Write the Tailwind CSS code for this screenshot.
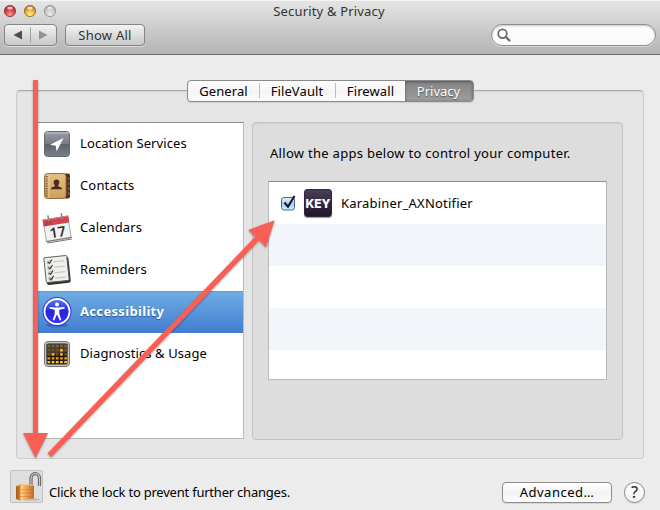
<!DOCTYPE html>
<html lang="en">
<head>
<meta charset="utf-8">
<title>Security &amp; Privacy</title>
<script src="https://cdn.jsdelivr.net/npm/@tailwindcss/browser@4"></script>
</head>
<body class="relative w-[660px] h-[510px] overflow-hidden bg-[#ececec] font-['Noto_Sans',sans-serif] text-[13px] leading-4 text-black flex flex-col">

<header class="h-[55px] shrink-0 border-b border-[#6a6a6a] bg-linear-to-b from-[#e6e6e6] to-[#b4b4b4] text-[#333] shadow-[inset_0_1px_0_#f4f4f4]">
  <div class="h-6 grid grid-cols-[1fr_auto_1fr] items-center pl-1 pr-[6px]">
    <div class="flex gap-2 -mt-[2px]">
      <svg class="w-3 h-3 overflow-visible" viewBox="0 0 12 12"><defs>
        <radialGradient id="r" cx=".5" cy=".8" r=".75"><stop offset="0" stop-color="#ff9c9c"/><stop offset=".5" stop-color="#e2474d"/><stop offset="1" stop-color="#a82028"/></radialGradient>
        <radialGradient id="y" cx=".5" cy=".8" r=".75"><stop offset="0" stop-color="#ffeb8c"/><stop offset=".5" stop-color="#eeb445"/><stop offset="1" stop-color="#a86f1d"/></radialGradient>
        <radialGradient id="g" cx=".5" cy=".8" r=".75"><stop offset="0" stop-color="#ececec"/><stop offset=".6" stop-color="#cacaca"/><stop offset="1" stop-color="#a5a5a5"/></radialGradient></defs>
        <circle cx="6" cy="6" r="5.6" fill="url(#r)" stroke="#873338" stroke-width=".8"/><ellipse cx="6" cy="3" rx="2.8" ry="1.5" fill="#fff" opacity=".7"/></svg>
      <svg class="w-3 h-3 overflow-visible" viewBox="0 0 12 12"><circle cx="6" cy="6" r="5.6" fill="url(#y)" stroke="#8a6528" stroke-width=".8"/><ellipse cx="6" cy="3" rx="2.8" ry="1.5" fill="#fff" opacity=".7"/></svg>
      <svg class="w-3 h-3 overflow-visible" viewBox="0 0 12 12"><circle cx="6" cy="6" r="5.6" fill="url(#g)" stroke="#8b8b8b" stroke-width=".8"/><ellipse cx="6" cy="3" rx="2.8" ry="1.5" fill="#fff" opacity=".6"/></svg>
    </div>
    <h1 class="-mt-[2px] text-[13px] tracking-[.17px]">Security &amp; Privacy</h1>
  </div>
  <div class="flex items-center h-[22px] pl-1 pr-1">
    <div class="flex items-center w-[53px] h-[22px] rounded border border-[#858585] bg-linear-to-b from-[#f3f3f3] to-[#c8c8c8] shadow-[0_1px_0_#dadada]">
      <svg class="w-full h-5" viewBox="0 0 51 20"><path d="M17 5.500v9L8.500 10z" fill="#4c4c4c"/><path d="M34 5.500v9l8.500-4.500z" fill="#929292"/><path d="M25.500 2.500v15" stroke="#a0a0a0"/></svg>
    </div>
    <button class="ml-2 w-20 h-[22px] rounded border border-[#858585] bg-linear-to-b from-[#f3f3f3] to-[#c8c8c8] shadow-[0_1px_0_#dadada] leading-5 tracking-[.25px]">Show All</button>
    <div class="ml-auto w-[165px] h-[22px] rounded-full border border-[#8d8d8d] bg-[#fcfcfc] shadow-[inset_0_1px_2px_#c5c5c5,0_1px_0_#d5d5d5] flex items-center pl-[5px]">
      <svg class="w-[14px] h-[14px]" viewBox="0 0 14 14" fill="none" stroke="#6a6a6a" stroke-width="1.800"><circle cx="5.500" cy="5.700" r="4.300"/><path d="m8.800 9 3.600 3.500" stroke-width="2.300" stroke-linecap="round"/></svg>
    </div>
  </div>
</header>

<main class="mt-[35px] ml-4 w-[628px] h-[369px] shrink-0 rounded border border-[#cdcdcd] border-t-[#a9a9a9] bg-[#e5e5e5] shadow-[inset_0_1px_1px_#d3d3d3] flex flex-col">
  <nav class="-mt-[11px] mx-auto w-[287px] h-[22px] shrink-0 flex rounded border border-[#898989] bg-linear-to-b from-white via-[#f5f5f5] to-[#fbfbfb] text-center leading-5 shadow-[0_1px_1px_#cfcfcf] overflow-hidden">
    <span class="w-[71px] pl-px tracking-[.1px]">General</span>
    <span class="h-[15px] mt-[2px] border-l border-[#bcbcbc]"></span>
    <span class="w-[75px] tracking-[.1px]">FileVault</span>
    <span class="h-[15px] mt-[2px] border-l border-[#bcbcbc]"></span>
    <span class="w-[69px] pl-px tracking-[.1px]">Firewall</span>
    <span class="flex-1 bg-linear-to-b from-[#858585] to-[#9d9d9d] text-white shadow-[inset_0_1px_3px_#555] [text-shadow:0_1px_1px_#555]">Privacy</span>
  </nav>
  <div class="flex mt-5 ml-[19px]">
    <ul class="w-[208px] h-[317px] border border-[#bababa] border-t-[#8d8d8d] bg-white">
      <li class="h-[42px] flex items-center pl-1 pb-[2px] gap-[7px]">
        <svg class="w-8 h-8" viewBox="0 0 32 32"><defs><linearGradient id="loc" x2="0" y2="1"><stop stop-color="#9a9ea5"/><stop offset=".48" stop-color="#777d86"/><stop offset=".5" stop-color="#5d636d"/><stop offset="1" stop-color="#7a8089"/></linearGradient></defs><rect x="3.500" y="4.500" width="25" height="25" rx="3" fill="url(#loc)" stroke="#646870"/><path d="M4.500 6h23" stroke="#bfc3c8"/><path d="M22.500 11 9 17.800l5.700 1 .9 5.700z" fill="#fff"/></svg>
        <span class="tracking-[.1px]">Location Services</span></li>
      <li class="h-[42px] flex items-center pl-1 pb-[2px] gap-[7px]">
        <svg class="w-8 h-8" viewBox="0 0 32 32"><defs><linearGradient id="con" x2="0" y2="1"><stop stop-color="#e4c085"/><stop offset="1" stop-color="#cf9f59"/></linearGradient></defs><rect x="22" y="4.500" width="7" height="25" rx="2" fill="#4f2e1e"/><path d="M27.800 8v3m0 2v3m0 2v3m0 2v3" stroke="#94674a" stroke-width="1.200"/><rect x="3.500" y="4.500" width="21.500" height="25" rx="3" fill="url(#con)" stroke="#94713d"/><path d="M5.500 7v21" stroke="#5b4930" stroke-width="2" stroke-dasharray="1 1.400"/><path d="M8 5v24" stroke="#edd6ab" stroke-width=".8"/><path d="M15.500 10.500c3.800 0 3.200 4.300 1.500 6 .2 1.700 3.900 1 4.200 3.700H9.800c.3-2.700 4-2 4.200-3.700-1.700-1.700-2.300-6 1.500-6z" fill="#4f2b1d"/></svg>
        <span class="tracking-[.15px]">Contacts</span></li>
      <li class="h-[42px] flex items-center pl-1 pb-[2px] gap-[7px]">
        <svg class="w-8 h-8 overflow-visible" viewBox="0 0 32 32"><g transform="rotate(-9 16 17)"><path d="M3.500 7h25v22h-25z" fill="#f2f2f2" stroke="#9a9a9a" stroke-width=".8"/><path d="M3 28.500h26M4 30.200h25" stroke="#777" stroke-width="1"/><path d="M3 6.500h26v7H3z" fill="#cf4650"/><path d="M3 7h26" stroke="#e67e84"/><path d="M9 3v6M22.500 3v6" stroke="#8c8c8c" stroke-width="1.600"/><text x="5" y="12.500" font-size="5" fill="#8f2028" font-family="Noto Sans">JUL</text><text x="16" y="26" text-anchor="middle" font-family="Noto Sans" font-weight="600" font-size="14" fill="#333">17</text></g></svg>
        <span class="tracking-[.1px]">Calendars</span></li>
      <li class="h-[42px] flex items-center pl-1 pb-[2px] gap-[7px]">
        <svg class="w-8 h-8 overflow-visible" viewBox="0 0 32 32"><g transform="rotate(-6 16 16)"><rect x="4.500" y="5" width="24" height="26" rx="2" fill="#333"/><rect x="4" y="3.500" width="23" height="25" rx="1" fill="#eff0eb" stroke="#555" stroke-width=".9"/><g fill="none" stroke="#bbb" stroke-width=".9"><path d="M13 8.500h11M13 14h11M13 19.500h11M13 25h11"/></g><g fill="none" stroke="#aaa" stroke-width=".7"><path d="M7 7h3.500v3H7zM7 12.500h3.500v3H7zM7 18h3.500v3H7zM7 23.500h3.500v3H7z"/></g><g fill="none" stroke="#333" stroke-width="1.100"><path d="m7.500 8 1.500 1.500L12 6M7.500 13.500 9 15l3-3.500M7.500 19 9 20.500l3-3.500M7.500 24.500 9 26l3-3.500"/></g></g></svg>
        <span class="tracking-[.1px]">Reminders</span></li>
      <li class="h-[42px] flex items-center pl-1 pb-[2px] gap-[7px] bg-linear-to-b from-[#70ade2] to-[#437dd0] shadow-[inset_0_1px_0_#5f9bd2] text-white font-bold [text-shadow:0_1px_1px_#2458a0]">
        <svg class="w-8 h-8 overflow-visible" viewBox="0 0 32 32"><defs><linearGradient id="acc" x2="0" y2="1"><stop stop-color="#5b7cec"/><stop offset=".5" stop-color="#2525dc"/><stop offset="1" stop-color="#3a33fa"/></linearGradient></defs><ellipse cx="16" cy="30" rx="11" ry="2.500" fill="#234d9b" opacity=".5"/><circle cx="16" cy="16.500" r="14.500" fill="#3538d8"/><circle cx="16" cy="16.500" r="12.500" fill="url(#acc)" stroke="#fff" stroke-width="1.900"/><circle cx="16" cy="9.500" r="2" fill="#fff"/><path d="M8.600 12 14 12.500h4l5.400-.5.200 1.400-5.300 1.400v4l2 6.300-1.500.5L16.300 20h-.6l-2.500 5.600-1.500-.5 2-6.300v-4l-5.300-1.400z" fill="#fff"/></svg>
        <span class="tracking-[.33px]">Accessibility</span></li>
      <li class="h-[42px] flex items-center pl-1 pb-[2px] gap-[7px]">
        <svg class="w-8 h-8" viewBox="0 0 32 32"><rect x="3.500" y="4.500" width="25" height="25" rx="3.500" fill="#c4c4c4" stroke="#777"/><rect x="5.500" y="6.500" width="21" height="21" rx="1.500" fill="#211a13"/><path d="M5.500 7h21v8l-21 4z" fill="#453e35"/><g fill="none" stroke-width="2.300" stroke-dasharray="2.700 1.500"><path d="M6.500 9h20" stroke="#80622e"/><path d="M6.500 13.200h20" stroke="#76511c"/><path d="M6.500 17.400h20" stroke="#87510c"/><path d="M6.500 21.400h20" stroke="#e39a18"/><path d="M6.500 25.200h20" stroke="#ffc328"/></g><path d="M19.100 12h2.700v2.400h-2.700zM19.100 16.200h2.700v2.400h-2.700zM10.700 16.200h2.700v2.400h-2.700z" fill="#ffb629"/></svg>
        <span class="tracking-[.08px]">Diagnostics &amp; Usage</span></li>
    </ul>
    <section class="ml-2 w-[371px] h-[318px] rounded border border-[#c2c2c2] bg-[#dddddd] pl-[15px] shadow-[inset_0_1px_1px_#d0d0d0]">
      <p class="mt-[22px] ml-[2px] tracking-[.29px] whitespace-nowrap">Allow the apps below to control your computer.</p>
      <div class="mt-5 w-[339px] h-[199px] border border-[#bababa] border-t-[#8d8d8d] bg-white">
        <div class="h-[42px] flex items-center pl-[11px]">
          <svg class="w-[18px] h-[18px] overflow-visible" viewBox="0 0 18 18"><defs><linearGradient id="cb" x2="0" y2="1"><stop stop-color="#edf5ff"/><stop offset=".5" stop-color="#a5cbf3"/><stop offset="1" stop-color="#d0f0ff"/></linearGradient></defs><rect x="1.500" y="3.500" width="13" height="12.500" rx="2.500" fill="url(#cb)" stroke="#4668a5"/><path d="m4.500 8.500 3.500 4.300L14.500 2" fill="none" stroke="#0d142b" stroke-width="2.100"/></svg>
          <div class="ml-[6px] -mt-px w-7 h-7 rounded-[3px] bg-linear-to-b from-[#4b3d57] to-[#20152b] border border-[#30253a] shadow-[0_1px_1px_#999] text-white font-['Inter',sans-serif] font-extrabold text-[12px] leading-[27px] flex justify-center">KEY</div>
          <span class="ml-[9px] tracking-[.2px]">Karabiner_AXNotifier</span>
        </div>
        <div class="h-[42px] bg-[#f2f6fb]"></div>
        <div class="h-[42px]"></div>
        <div class="h-[42px] bg-[#f2f6fb]"></div>
      </div>
    </section>
  </div>
</main>

<footer class="mt-[11px] pl-[10px] pr-[15px] h-[34px] flex items-end">
  <div class="w-[33px] h-[33px] mb-px rounded-[2px] border border-[#c0c0c0] bg-[#dedede]">
    <svg class="w-[31px] h-[31px]" viewBox="0 0 31 31"><defs><linearGradient id="lk"><stop stop-color="#a85a1c"/><stop offset=".22" stop-color="#cf7d2d"/><stop offset=".27" stop-color="#ffd28b"/><stop offset=".6" stop-color="#eda04a"/><stop offset="1" stop-color="#bc6b25"/></linearGradient></defs><ellipse cx="20" cy="28.500" rx="9" ry="1.300" fill="#aaa" opacity=".6"/><path d="M20 15V7.500C20 1 28.500 1 28.500 7.500V15" fill="none" stroke="#626262" stroke-width="3.200"/><path d="M20 15V7.500C20 1 28.500 1 28.500 7.500V15" fill="none" stroke="#c9c9c9" stroke-width="1.200"/><path d="m5 15 4-1.500 14 .8V27.500L9 29.500 5 28z" fill="url(#lk)"/><path d="m5 15 4-1.500 14 .8" fill="none" stroke="#f6c27c"/><path d="M9.500 18.500H23M9.500 22H23M9.500 25.500H23" stroke="#b86c27" stroke-width=".7" opacity=".6"/></svg>
  </div>
  <span class="ml-[6px] mb-[4px] tracking-[-.22px] whitespace-nowrap">Click the lock to prevent further changes.</span>
  <button class="ml-auto mb-px w-[110px] h-[21px] rounded border border-[#8c8c8c] bg-linear-to-b from-white via-[#f2f2f2] to-[#fcfcfc] leading-[19px] shadow-[0_1px_1px_#d5d5d5] tracking-[.5px]">Advanced…</button>
  <button class="ml-3 mb-px w-[21px] h-[21px] rounded-full border border-[#888] bg-linear-to-b from-white to-[#f2f2f2] text-[16px] font-medium text-[#333] leading-[19px] shadow-[0_1px_1px_#d5d5d5]">?</button>
</footer>

<svg class="absolute inset-0 w-[660px] h-[510px] pointer-events-none drop-shadow-[0_1px_1px_rgba(0,0,0,.35)]" viewBox="0 0 660 510" fill="#fa5f55">
  <path d="M33 80h5v353h10l-12.500 25L23 433h10z"/>
  <path d="M47.600 453.300 255.200 236.700 248.300 230 274.600 220.200 266 247.300 259 240.300 51.300 457z"/>
</svg>
</body>
</html>
